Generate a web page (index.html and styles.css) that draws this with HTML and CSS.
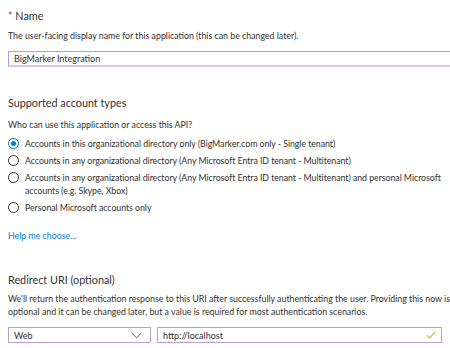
FILE: index.html
```html
<!DOCTYPE html>
<html>
<head>
<meta charset="utf-8">
<link rel="stylesheet" href="styles.css">
</head>
<body>
<div class="page">
  <section class="field">
    <h2 class="label"><span class="req">*</span> Name</h2>
    <p class="desc">The user-facing display name for this application (this can be changed later).</p>
    <div class="textbox name-box">BigMarker Integration</div>
  </section>

  <section class="section">
    <h2 class="heading">Supported account types</h2>
    <p class="desc q">Who can use this application or access this API?</p>
    <ul class="radios">
      <li class="radio checked"><span class="dot"></span><span class="rtext">Accounts in this organizational directory only (BigMarker.com only - Single tenant)</span></li>
      <li class="radio"><span class="dot"></span><span class="rtext">Accounts in any organizational directory (Any Microsoft Entra ID tenant - Multitenant)</span></li>
      <li class="radio"><span class="dot"></span><span class="rtext">Accounts in any organizational directory (Any Microsoft Entra ID tenant - Multitenant) and personal Microsoft accounts (e.g. Skype, Xbox)</span></li>
      <li class="radio"><span class="dot"></span><span class="rtext">Personal Microsoft accounts only</span></li>
    </ul>
    <a class="help" href="#">Help me choose...</a>
  </section>

  <section class="section redirect">
    <h2 class="heading">Redirect URI (optional)</h2>
    <p class="desc">We'll return the authentication response to this URI after successfully authenticating the user. Providing this now is optional and it can be changed later, but a value is required for most authentication scenarios.</p>
    <div class="uri-row">
      <div class="select">
        <span>Web</span>
        <svg class="chev" width="11" height="7" viewBox="0 0 11 7"><path d="M0.5 0.8 L5.5 5.8 L10.5 0.8" fill="none" stroke="#605e5c" stroke-width="1"/></svg>
      </div>
      <div class="textbox uri-box">
        <span>http://localhost</span>
        <svg class="check" width="10" height="8" viewBox="0 0 10 8"><path d="M0.8 4.2 L3.6 7 L9.3 0.8" fill="none" stroke="#6bb700" stroke-width="1"/></svg>
      </div>
    </div>
  </section>
</div>
</body>
</html>
```
FILE: styles.css
```css
* { box-sizing: border-box; }
html, body { margin: 0; padding: 0; background: #fff; }
body {
  font-family: "Lato", "Open Sans", sans-serif;
  color: #323130;
  overflow: hidden;
}
.page { padding: 8px 0 0 8px; width: 450px; }
h2, p, ul { margin: 0; padding: 0; }
.label {
  font-size: 10.8px;
  font-weight: 400;
  line-height: 16px;
}
.req { color: #d13438; }
.desc {
  font-size: 8.8px;
  line-height: 13px;
  margin-top: 5px;
}
.textbox {
  border: 1px solid #b99fd3;
  border-bottom: 2px solid #dcc3ea;
  height: 16px;
  font-size: 9px;
  line-height: 13px;
  padding: 0 5px;
  display: flex;
  align-items: center;
}
.name-box { margin-top: 9px; margin-right: -4px; }
.section { margin-top: 28px; }
.heading {
  font-size: 10.8px;
  font-weight: 400;
  line-height: 16px;
}
.q { margin-top: 7px; }
.radios { list-style: none; margin-top: 6px; }
.radio {
  display: flex;
  align-items: flex-start;
  font-size: 8.8px;
  letter-spacing: -0.05px;
  line-height: 13px;
  margin-bottom: 4px;
}
.dot {
  flex: none;
  width: 11px;
  height: 11px;
  border: 1px solid #323130;
  border-radius: 50%;
  margin: 1px 6px 0 0;
  position: relative;
}
.checked .dot { border-color: #0078d4; }
.checked .dot::after {
  content: "";
  position: absolute;
  left: 2px; top: 2px;
  width: 5px; height: 5px;
  border-radius: 50%;
  background: #0078d4;
}
.help {
  display: block;
  margin-top: 15px;
  font-size: 8.8px;
  line-height: 13px;
  color: #0078d4;
  text-decoration: none;
}
.redirect { margin-top: 30px; }
.redirect .desc { margin-top: 4px; }
.uri-row { display: flex; gap: 6px; margin-top: 9px; }
.select {
  width: 143px;
  height: 16px;
  border: 1px solid #b99fd3;
  font-size: 9px;
  padding: 0 8px 0 5px;
  display: flex;
  align-items: center;
  justify-content: space-between;
}
.uri-box {
  width: 285px;
  border-bottom: 1px solid #b99fd3;
  justify-content: space-between;
}
```
